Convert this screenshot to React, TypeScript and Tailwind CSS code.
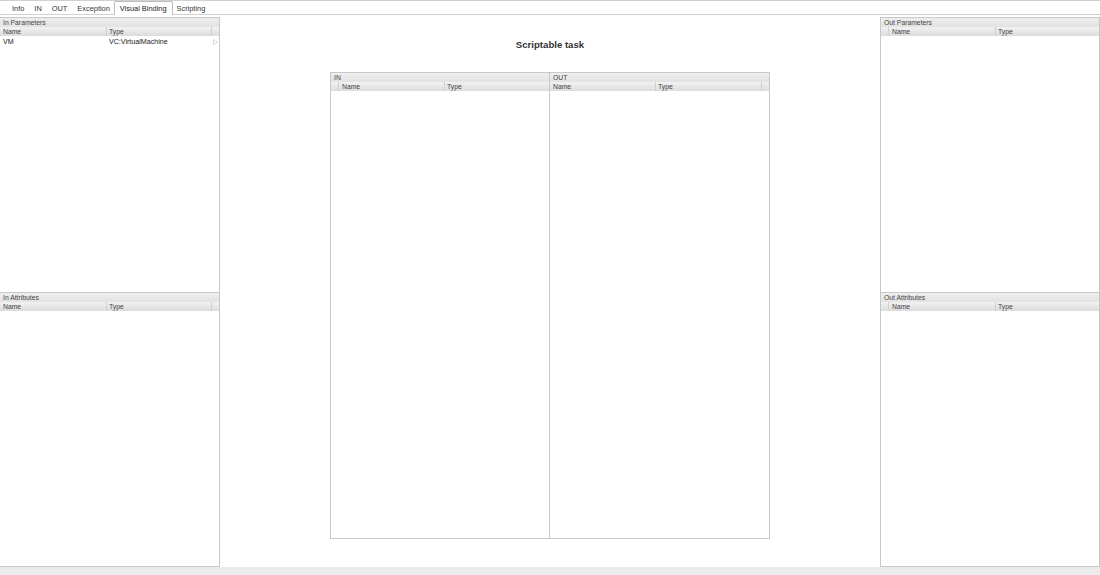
import type { ReactNode } from 'react'

const tabs = ['Info', 'IN', 'OUT', 'Exception', 'Visual Binding', 'Scripting']

function HeaderRow({ indent = false, tail = true, nameWidth }: { indent?: boolean; tail?: boolean; nameWidth: number }) {
  return (
    <div className="flex h-[9px] items-center bg-gradient-to-b from-[#f2f2f2] to-[#dcdcdc] text-[6.8px] leading-[10px] text-[#444]">
      {indent && <div className="h-full w-[8px] shrink-0 border-r border-[#d0d0d0]" />}
      <div className="h-full shrink-0 border-r border-[#cfcfcf] pl-[3px]" style={{ width: nameWidth }}>
        Name
      </div>
      <div className="h-full flex-1 pl-[2px]">Type</div>
      {tail && <div className="h-full w-[8px] shrink-0 border-l border-[#d0d0d0]" />}
    </div>
  )
}

function TitleRow({ title }: { title: string }) {
  return (
    <div className="h-[9px] bg-gradient-to-b from-[#eeeeee] to-[#e2e2e2] pl-[3px] text-[6.8px] leading-[9px] text-[#444]">
      {title}
    </div>
  )
}

function Panel({
  title,
  indent,
  className,
  children,
}: {
  title: string
  indent?: boolean
  className: string
  children?: ReactNode
}) {
  return (
    <div className={`flex flex-col overflow-hidden border-[#c8c8c8] ${className}`}>
      <TitleRow title={title} />
      <HeaderRow indent={indent} tail={!indent} nameWidth={107} />
      {children}
    </div>
  )
}

export default function App() {
  return (
    <div className="flex h-[575px] w-[1100px] flex-col overflow-hidden bg-white font-['Liberation_Sans',Arial,sans-serif] text-black">
      {/* Tab strip */}
      <div className="flex h-[15px] shrink-0 items-end border-b border-t border-[#d0d0d0] pl-[7px] text-[7.4px] leading-[15px] text-[#333]">
        {tabs.map((tab) =>
          tab === 'Visual Binding' ? (
            <div
              key={tab}
              className="relative top-[1px] mx-[-1px] h-[14px] rounded-t-[2px] border border-b-0 border-[#bdbdbd] bg-white px-[5px] leading-[14px] text-[#222]"
            >
              {tab}
            </div>
          ) : (
            <div key={tab} className="h-[13px] px-[5px]">
              {tab}
            </div>
          ),
        )}
      </div>

      <div className="flex min-h-0 flex-1 pt-[2px]">
        {/* In side */}
        <div className="flex w-[220px] shrink-0 flex-col border-r border-[#c8c8c8]">
          <Panel title="In Parameters" className="h-[275px] border-t">
            <div className="mt-[1px] flex h-[10px] items-center text-[7.1px] leading-[10px] text-[#222]">
              <div className="w-[108px] pl-[3px]">VM</div>
              <div className="flex-1 pl-[1px]">VC:VirtualMachine</div>
              <svg width="5" height="6" viewBox="0 0 5 6" className="mr-[1px]">
                <path d="M0.5 0.5 L4.5 3 L0.5 5.5 Z" fill="none" stroke="#c8c8c8" strokeWidth="0.7" />
              </svg>
            </div>
          </Panel>
          <Panel title="In Attributes" className="flex-1 border-b border-t" />
        </div>

        {/* Center */}
        <div className="flex flex-1 flex-col items-center">
          <div className="mt-[21px] h-[14px] text-[9.6px] font-bold leading-[14px] text-[#333]">Scriptable task</div>
          <div className="mt-[20px] flex h-[467px] w-[440px] border border-[#c8c8c8]">
            <div className="flex w-[219px] flex-col border-r border-[#c8c8c8]">
              <TitleRow title="IN" />
              <HeaderRow indent tail={false} nameWidth={106} />
            </div>
            <div className="flex flex-1 flex-col">
              <TitleRow title="OUT" />
              <HeaderRow nameWidth={106} />
            </div>
          </div>
        </div>

        {/* Out side */}
        <div className="flex w-[220px] shrink-0 flex-col border-l border-r border-[#c8c8c8]">
          <Panel title="Out Parameters" indent className="h-[275px] border-t" />
          <Panel title="Out Attributes" indent className="flex-1 border-b border-t" />
        </div>
      </div>

      {/* Bottom strip */}
      <div className="h-[8px] shrink-0 bg-[#ebebeb]" />
    </div>
  )
}
